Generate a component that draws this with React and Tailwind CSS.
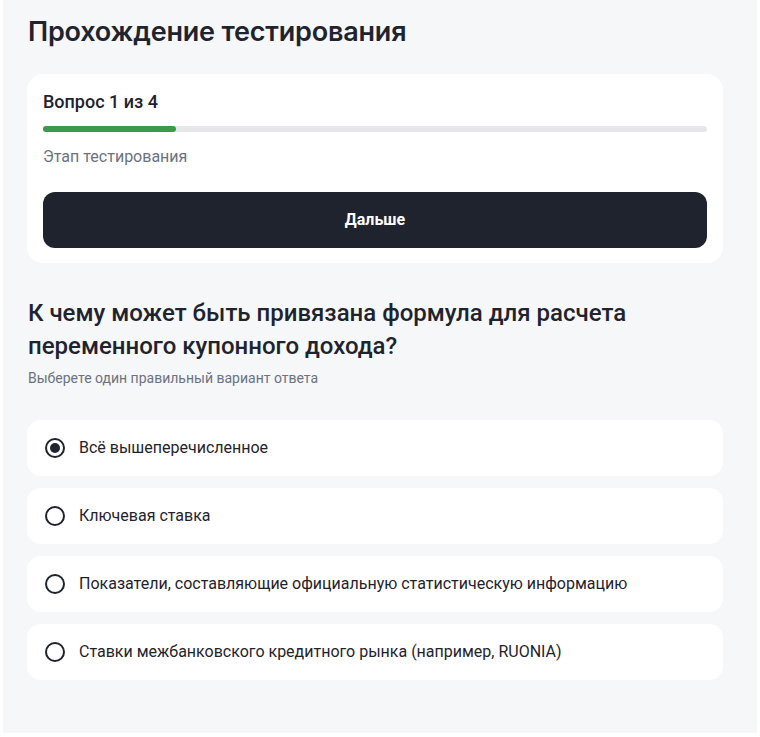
import React, { useState } from "react";

const options = [
  "Всё вышеперечисленное",
  "Ключевая ставка",
  "Показатели, составляющие официальную статистическую информацию",
  "Ставки межбанковского кредитного рынка (например, RUONIA)",
];

function Radio({ checked }) {
  return (
    <span className="flex items-center justify-center w-[20px] h-[20px] rounded-full border-2 border-[#1f232d] shrink-0">
      {checked && <span className="w-[10px] h-[10px] rounded-full bg-[#1f232d]" />}
    </span>
  );
}

export default function App() {
  const [selected, setSelected] = useState(0);

  return (
    <div className="w-full min-h-[737px] bg-white px-[3px] pb-[4px] font-['Roboto',sans-serif] text-[#1f232d]">
      <div className="bg-[#f6f7f9] pl-6 pt-[16px] pb-[53px]">
        <div className="w-[696px]">
          {/* header */}
          <h1 className="font-['Inter',sans-serif] font-semibold text-[27px] leading-[32px] tracking-[-0.2px] pl-[1px]">
            Прохождение тестирования
          </h1>

          {/* progress card */}
          <div className="mt-[26px] bg-white rounded-2xl px-4 pt-4 pb-[15px]">
            <div className="text-[18px] leading-[24px] font-medium">Вопрос 1 из 4</div>
            <div className="mt-3 h-[6px] w-full rounded-full bg-[#e5e7eb]">
              <div className="h-full w-[20%] rounded-full bg-[#3a9b4d]" />
            </div>
            <div className="mt-[15px] text-[16px] leading-[20px] text-[#6b7280]">Этап тестирования</div>
            <button
              type="button"
              className="mt-[25px] w-full h-[56px] rounded-xl bg-[#1f232d] text-white font-bold text-[16px]"
            >
              Дальше
            </button>
          </div>

          {/* question */}
          <h2 className="mt-[34px] pl-[1px] text-[24px] leading-[33px] font-medium">
            К чему может быть привязана формула для расчета
            <br />
            переменного купонного дохода?
          </h2>
          <p className="mt-[6px] pl-[1px] text-[14px] leading-[18px] text-[#6b7280]">
            Выберете один правильный вариант ответа
          </p>

          <div className="mt-[33px] flex flex-col gap-3">
            {options.map((text, i) => (
              <label
                key={text}
                onClick={() => setSelected(i)}
                className="flex items-center gap-[14px] h-[56px] bg-white rounded-[14px] pl-[18px] pr-4 cursor-pointer"
              >
                <Radio checked={selected === i} />
                <span className="text-[16px] leading-[20px]">{text}</span>
              </label>
            ))}
          </div>
        </div>
      </div>
    </div>
  );
}
